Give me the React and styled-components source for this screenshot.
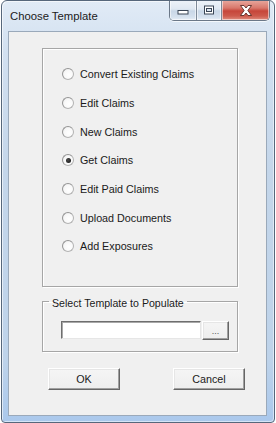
import React, { useState } from "react";
import styled, { createGlobalStyle } from "styled-components";

const Global = createGlobalStyle`
  html, body { margin: 0; padding: 0; background: #ffffff; }
  body { font-family: "Liberation Sans", Arial, sans-serif; }
  * { box-sizing: border-box; }
`;

const Window = styled.div`
  margin-left: 1px;
  width: 274px;
  height: 423px;
  display: flex;
  flex-direction: column;
  border: 1px solid #56677b;
  border-radius: 6px 6px 4px 4px;
  background: linear-gradient(180deg, #e1ebf6 0%, #d2e0f0 12%, #c4d6ea 40%, #bed3ea 85%, #aac8ec 100%);
  box-shadow: inset 1px 1px 0 rgba(255,255,255,0.6), inset -1px -1px 0 rgba(255,255,255,0.5);
  overflow: hidden;
`;

const TitleBar = styled.div`
  height: 30px;
  flex: none;
  display: flex;
  align-items: center;
  padding-left: 8px;
`;

const Title = styled.div`
  font-family: "Liberation Sans", Arial, sans-serif;
  font-size: 11.3px;
  color: #1b1b1b;
  flex: 1;
`;

const Controls = styled.div`
  align-self: flex-start;
  margin-top: -1px;
  margin-right: 4px;
  display: flex;
  height: 21px;
  border: 1px solid #6b7888;
  border-top: none;
  border-radius: 0 0 5px 5px;
  overflow: hidden;
  box-shadow: 0 1px 0 rgba(255,255,255,0.7);
`;

const CtrlBtn = styled.div`
  width: ${(p) => p.$w}px;
  height: 100%;
  display: flex;
  align-items: center;
  justify-content: center;
  border-left: ${(p) => (p.$first ? "none" : "1px solid #7d8998")};
  background: ${(p) =>
    p.$close
      ? "linear-gradient(180deg, #e9aaa0 0%, #d9786c 40%, #c6463a 55%, #cd5a4c 80%, #e08e80 100%)"
      : "linear-gradient(180deg, #eef3f9 0%, #dfe8f2 45%, #c9d7e7 55%, #d5e1ee 85%, #e7eef6 100%)"};
  box-shadow: inset 0 0 0 1px rgba(255,255,255,0.55);
`;

const Client = styled.div`
  flex: 1;
  margin: 0 7px 6px 6px;
  border: 1px solid #9aa9ba;
  background: #f0f0f0;
  display: flex;
  flex-direction: column;
  align-items: flex-start;
  padding: 16px 0 0 33px;
  font-family: "Liberation Sans", Arial, sans-serif;
  font-size: 10.75px;
  color: #1a1a1a;
`;

const GroupBox = styled.div`
  width: 196px;
  height: 239px;
  border: 1px solid #a6a6a6;
  box-shadow: inset 1px 1px 0 #ffffff, 1px 1px 0 #ffffff;
  display: flex;
  flex-direction: column;
  padding: 11px 0 0 19px;
`;

const RadioRow = styled.label`
  height: 28.67px;
  display: flex;
  align-items: center;
  gap: 6px;
  cursor: default;
  white-space: nowrap;
`;

const RadioCircle = styled.span`
  width: 12px;
  height: 12px;
  border-radius: 50%;
  border: 1px solid #b4b4b4;
  border-top-color: #959595;
  border-left-color: #959595;
  background: radial-gradient(circle at 60% 60%, #ffffff 0%, #f8f8f8 55%, #e2e2e2 100%);
  display: flex;
  align-items: center;
  justify-content: center;
  flex: none;
  &::after {
    content: "";
    width: 5px;
    height: 5px;
    border-radius: 50%;
    background: radial-gradient(circle at 40% 40%, #4a4a4a 0%, #0e0e0e 100%);
    display: ${(p) => (p.$checked ? "block" : "none")};
  }
`;

const Fieldset = styled.fieldset`
  width: 196px;
  margin: 6px 0 0 0;
  padding: 0 0 11px 0;
  min-inline-size: 0;
  border: 1px solid #a6a6a6;
  box-shadow: inset 1px 1px 0 #ffffff, 1px 1px 0 #ffffff;
`;

const Legend = styled.legend`
  margin-left: 6px;
  padding: 4px 3px 0 3px;
  line-height: 12px;
  font-size: 10.6px;
  color: #1a1a1a;
`;

const FieldRow = styled.div`
  margin: 12px 0 0 18px;
  display: flex;
  align-items: flex-start;
  gap: 1px;
`;

const TextField = styled.div`
  width: 140px;
  height: 18px;
  background: #ffffff;
  border: 1px solid;
  border-color: #6e6e6e #e6e6e6 #e6e6e6 #6e6e6e;
  box-shadow: inset 1px 1px 0 #a8a8a8;
`;

const RaisedButton = styled.div`
  width: ${(p) => p.$w}px;
  height: ${(p) => p.$h}px;
  display: flex;
  align-items: center;
  justify-content: center;
  border: 1px solid;
  border-color: #ffffff #666666 #666666 #ffffff;
  box-shadow: inset -1px -1px 0 #a0a0a0, inset 1px 1px 0 #e6e6e6;
  background: linear-gradient(180deg, #f5f5f5 0%, #eeeeee 100%);
  font-size: ${(p) => p.$fs || 10.75}px;
  color: ${(p) => p.$color || "#1a1a1a"};
  user-select: none;
`;

const ButtonRow = styled.div`
  margin-top: 16px;
  margin-left: 6px;
  display: flex;
  gap: 53px;
`;

const options = [
  "Convert Existing Claims",
  "Edit Claims",
  "New Claims",
  "Get Claims",
  "Edit Paid Claims",
  "Upload Documents",
  "Add Exposures",
];

function MinIcon() {
  return (
    <svg width="12" height="10" viewBox="0 0 12 10">
      <rect x="1" y="5.5" width="10" height="3.5" fill="#ffffff" stroke="#3a4656" strokeWidth="1" />
    </svg>
  );
}

function MaxIcon() {
  return (
    <svg width="12" height="10" viewBox="0 0 12 10">
      <rect x="1.5" y="1" width="9" height="8" fill="#ffffff" stroke="#3a4656" strokeWidth="1" />
      <rect x="3.5" y="3.5" width="5" height="3" fill="#d8e2ee" stroke="#3a4656" strokeWidth="1" />
    </svg>
  );
}

function CloseIcon() {
  return (
    <svg width="14" height="11" viewBox="0 0 14 11">
      <path
        d="M1.5 0.5 H5 L7 3 L9 0.5 H12.5 L8.9 5.5 L12.5 10.5 H9 L7 8 L5 10.5 H1.5 L5.1 5.5 Z"
        fill="#ffffff"
        stroke="#5a2a24"
        strokeWidth="0.9"
        strokeLinejoin="round"
      />
    </svg>
  );
}

export default function App() {
  const [selected, setSelected] = useState(3);
  return (
    <>
      <Global />
      <Window>
        <TitleBar>
          <Title>Choose Template</Title>
          <Controls>
            <CtrlBtn $w={26} $first>
              <MinIcon />
            </CtrlBtn>
            <CtrlBtn $w={25}>
              <MaxIcon />
            </CtrlBtn>
            <CtrlBtn $w={48} $close>
              <CloseIcon />
            </CtrlBtn>
          </Controls>
        </TitleBar>
        <Client>
          <GroupBox>
            {options.map((o, i) => (
              <RadioRow key={o} onClick={() => setSelected(i)}>
                <RadioCircle $checked={i === selected} />
                <span>{o}</span>
              </RadioRow>
            ))}
          </GroupBox>
          <Fieldset>
            <Legend>Select Template to Populate</Legend>
            <FieldRow>
              <TextField />
              <RaisedButton $w={27} $h={19} $fs={9} $color="#555555">...</RaisedButton>
            </FieldRow>
          </Fieldset>
          <ButtonRow>
            <RaisedButton $w={72} $h={22}>OK</RaisedButton>
            <RaisedButton $w={72} $h={22}>Cancel</RaisedButton>
          </ButtonRow>
        </Client>
      </Window>
    </>
  );
}
